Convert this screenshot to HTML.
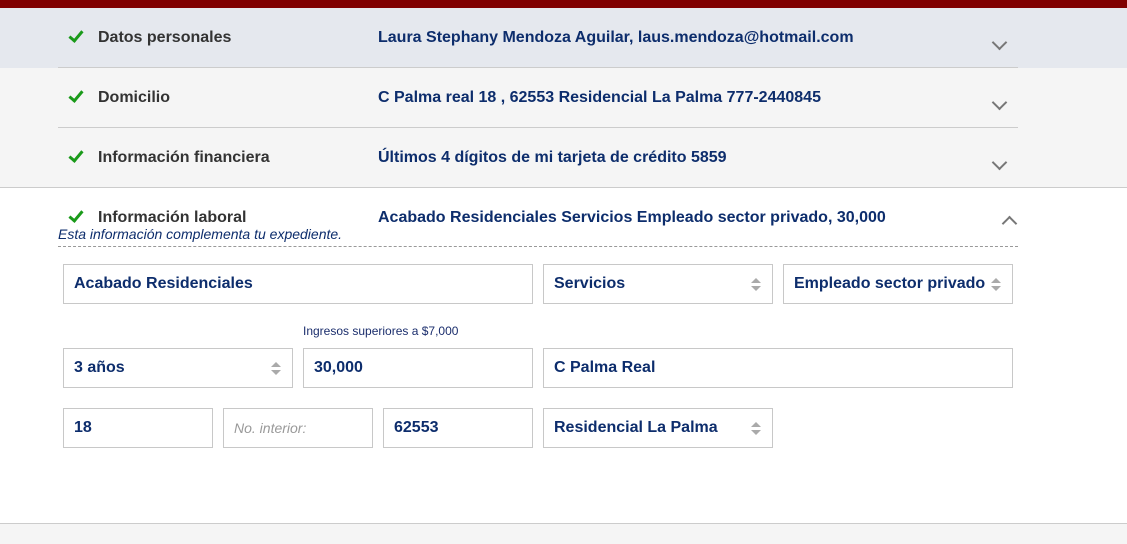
<!DOCTYPE html>
<html><head><meta charset="utf-8"><style>
*{margin:0;padding:0;box-sizing:border-box}
body{width:1127px;height:544px;overflow:hidden;background:#fff;font-family:"Liberation Sans",Arial,sans-serif;position:relative}
.a{position:absolute}
.lab{font-size:16px;font-weight:bold;color:#333}
.val{font-size:16px;font-weight:bold;color:#0d2d6c}
.chk{position:absolute;width:8px;height:14px;border-right:3px solid #1a9a1a;border-bottom:3px solid #1a9a1a;transform:rotate(40deg)}
.box{position:absolute;border:1px solid #c8c8c8;height:40px;background:#fff;font-size:16px;font-weight:bold;color:#0d2d6c;padding:0 10px;line-height:38px;white-space:nowrap}
.sel:after{content:"";position:absolute;right:11px;top:13px;width:0;height:0;border-left:5px solid transparent;border-right:5px solid transparent;border-bottom:5px solid #aaa}
.sel:before{content:"";position:absolute;right:11px;top:21px;width:0;height:0;border-left:5px solid transparent;border-right:5px solid transparent;border-top:5px solid #aaa}
.chev{position:absolute;width:11px;height:11px;border-right:2px solid #777;border-bottom:2px solid #777}
</style></head><body>
<div class="a" style="left:0;top:0;width:1127px;height:8px;background:#800000"></div>
<div class="a" style="left:0;top:8px;width:1127px;height:60px;background:#e5e8ee"></div>
<div class="a" style="left:0;top:68px;width:1127px;height:119px;background:#f5f5f5"></div>
<div class="a" style="left:58px;top:67px;width:960px;height:1px;background:#ccc"></div>
<div class="a" style="left:58px;top:127px;width:960px;height:1px;background:#ccc"></div>
<div class="a" style="left:0;top:187px;width:1127px;height:1px;background:#ccc"></div>
<div class="a" style="left:0;top:523px;width:1127px;height:21px;background:#f5f5f5;border-top:1px solid #ccc"></div>

<div class="chk" style="left:72px;top:28px"></div><div class="a lab" style="left:98px;top:29px">Datos personales</div><div class="a val" style="left:378px;top:29px">Laura Stephany Mendoza Aguilar, laus.mendoza@hotmail.com</div>
<div class="chev" style="left:994px;top:37px;transform:rotate(45deg)"></div>
<div class="chk" style="left:72px;top:88px"></div><div class="a lab" style="left:98px;top:89px">Domicilio</div><div class="a val" style="left:378px;top:89px">C Palma real 18 , 62553 Residencial La Palma 777-2440845</div>
<div class="chev" style="left:994px;top:97px;transform:rotate(45deg)"></div>
<div class="chk" style="left:72px;top:148px"></div><div class="a lab" style="left:98px;top:149px">Información financiera</div><div class="a val" style="left:378px;top:149px">Últimos 4 dígitos de mi tarjeta de crédito 5859</div>
<div class="chev" style="left:994px;top:157px;transform:rotate(45deg)"></div>
<div class="chk" style="left:72px;top:208px"></div><div class="a lab" style="left:98px;top:209px">Información laboral</div><div class="a val" style="left:378px;top:209px">Acabado Residenciales Servicios Empleado sector privado, 30,000</div>
<div class="chev" style="left:1004px;top:218px;transform:rotate(225deg)"></div>
<div class="a" style="left:58px;top:226px;font-size:14px;font-style:italic;color:#0d2d6c">Esta información complementa tu expediente.</div>
<div class="a" style="left:58px;top:246px;width:960px;border-top:1px dashed #999"></div>

<div class="box" style="left:63px;top:264px;width:470px">Acabado Residenciales</div>
<div class="box sel" style="left:543px;top:264px;width:230px">Servicios</div>
<div class="box sel" style="left:783px;top:264px;width:230px">Empleado sector privado</div>
<div class="a" style="left:303px;top:324px;font-size:12px;color:#1a2d6c">Ingresos superiores a $7,000</div>
<div class="box sel" style="left:63px;top:348px;width:230px">3 años</div>
<div class="box" style="left:303px;top:348px;width:230px">30,000</div>
<div class="box" style="left:543px;top:348px;width:470px">C Palma Real</div>
<div class="box" style="left:63px;top:408px;width:150px">18</div>
<div class="box" style="left:223px;top:408px;width:150px;font-weight:normal;font-style:italic;color:#999;font-size:14px">No. interior:</div>
<div class="box" style="left:383px;top:408px;width:150px">62553</div>
<div class="box sel" style="left:543px;top:408px;width:230px">Residencial La Palma</div>
</body></html>
